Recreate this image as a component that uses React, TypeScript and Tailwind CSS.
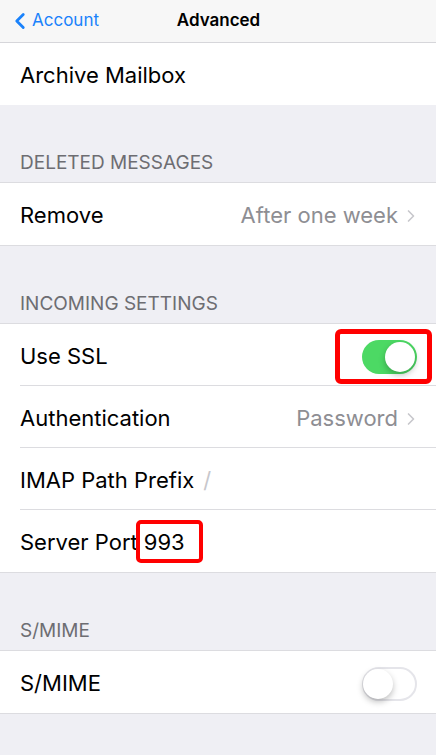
import { ChevronLeft, ChevronRight } from 'lucide-react'

const font = { fontFamily: 'Inter, "Liberation Sans", sans-serif' }

function Toggle({ on }: { on: boolean }) {
    return (
        <div
            className={`relative w-[55px] h-[34px] rounded-full ${on ? 'bg-[#4cd964]' : 'bg-white border-2 border-[#e5e5ea]'}`}
        >
            <div
                className={`absolute w-[30px] h-[30px] rounded-full bg-white shadow-[0_3px_6px_rgba(0,0,0,0.25)] ${on ? 'top-[2px] right-[2px]' : 'top-0 -left-[1px]'}`}
            />
        </div>
    )
}

function Row({ children, last }: { children: React.ReactNode; last?: boolean }) {
    return (
        <div className="relative h-[62px] flex items-center pl-5 pr-[19px] pt-[3px] bg-white">
            {children}
            {!last && <div className="absolute bottom-0 left-5 right-0 h-px bg-[#dcdce0]" />}
        </div>
    )
}

function Chevron() {
    return <ChevronRight className="w-5 h-5 ml-[3px] -mr-[4px] text-[#c7c7cc]" strokeWidth={2} />
}

function Header({ title }: { title: string }) {
    return (
        <div className="h-[78px] flex items-end pl-5 pb-[5px] border-b border-[#dcdce0]">
            <span className="text-[19px] text-[#6d6d72]">{title}</span>
        </div>
    )
}

export default function App() {
    return (
        <div className="w-[436px] h-[755px] bg-[#efeff4] overflow-hidden" style={font}>
            {/* Nav bar */}
            <div className="relative h-[43px] bg-[#f7f7f7] border-b border-[#d6d6da] flex items-center">
                <div className="flex items-center pl-[7px] text-[#1a82fb]">
                    <ChevronLeft className="w-[26px] h-[26px]" strokeWidth={2.6} />
                    <span className="text-[17px] -ml-[1px]">Account</span>
                </div>
                <span className="absolute left-0 right-0 text-center text-[17px] font-semibold text-black pl-[1px]">
                    Advanced
                </span>
            </div>

            <div className="text-[22px] text-black">
                <Row last>
                    <span>Archive Mailbox</span>
                </Row>

                <Header title="DELETED MESSAGES" />
                <Row last>
                    <span>Remove</span>
                    <span className="ml-auto text-[#8e8e93]">After one week</span>
                    <Chevron />
                </Row>
                <div className="h-px bg-[#dcdce0]" />

                <Header title="INCOMING SETTINGS" />
                <Row>
                    <span>Use SSL</span>
                    <div className="ml-auto relative">
                        <div className="absolute -left-[27px] -top-[11px] w-[97px] h-[55px] border-[5px] border-[#ff0000] rounded-[6px]" />
                        <Toggle on />
                    </div>
                </Row>
                <Row>
                    <span>Authentication</span>
                    <span className="ml-auto text-[#8e8e93]">Password</span>
                    <Chevron />
                </Row>
                <Row>
                    <span>IMAP Path Prefix</span>
                    <span className="ml-[9px] text-[#c7c7cc]">/</span>
                </Row>
                <Row last>
                    <span>Server Port</span>
                    <span className="relative ml-[6px]">
                        993
                        <span className="absolute -left-[8px] -top-[6px] w-[67px] h-[43px] border-[4px] border-[#ff0000] rounded-[5px]" />
                    </span>
                </Row>
                <div className="h-px bg-[#dcdce0]" />

                <Header title="S/MIME" />
                <Row last>
                    <span>S/MIME</span>
                    <div className="ml-auto">
                        <Toggle on={false} />
                    </div>
                </Row>
                <div className="h-px bg-[#dcdce0]" />
            </div>
        </div>
    )
}
